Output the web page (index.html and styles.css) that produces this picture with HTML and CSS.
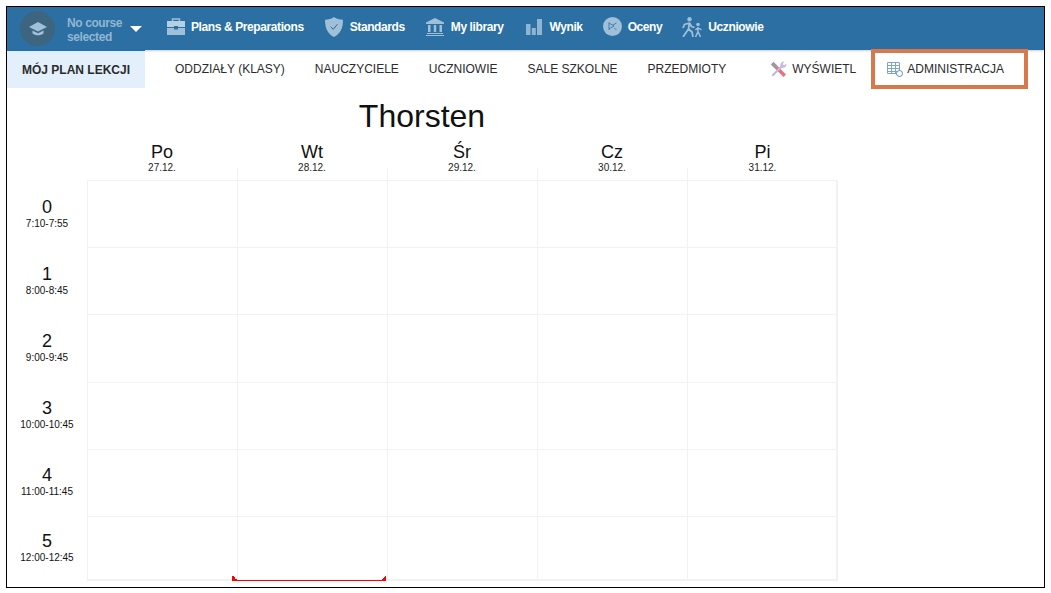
FILE: index.html
```html
<!DOCTYPE html>
<html lang="en">
<head>
    <meta charset="UTF-8">
    <meta name="viewport" content="width=device-width, initial-scale=1.0">
    <title>Plan lekcji</title>
    <link rel="stylesheet" href="styles.css">
</head>
<body>

<div class="frame">
    <header class="topbar">
        <div class="course">
            <span class="course-badge">
                <svg width="20" height="16" viewBox="0 0 20 16"><path d="M10 1 19 6 10 10.5 1 6Z" fill="#9fc0d8"/><path d="M4.5 9.5v3c2.8 2.4 8.2 2.4 11 0v-3L10 12.3Z" fill="#9fc0d8"/></svg>
            </span>
            <span class="course-name">No course selected</span>
            <span class="caret"></span>
        </div>
        <a class="top-item plans">
            <svg width="18" height="17" viewBox="0 0 18 17"><path d="M5.5 3V1h7v2" fill="none" stroke="#9fc0d8" stroke-width="1.4"/><path d="M0 3h18v6h-7V8H7v1H0Z" fill="#b5d0e3"/><path d="M0 10h7v1.5h4V10h7v7H0Z" fill="#9fc0d8"/></svg>
            Plans &amp; Preparations
        </a>
        <a class="top-item standards">
            <svg width="18" height="20" viewBox="0 0 18 20"><path d="M9 0c2.5 1.800 5.500 2.700 9 2.800C18 11 15.500 16.800 9 20 2.500 16.800 0 11 0 2.800 3.500 2.700 6.500 1.800 9 0Z" fill="#9fc0d8"/><path d="M5.800 9.800 8.200 12.300 12.500 7.200" fill="none" stroke="#2c6fa3" stroke-width="1"/></svg>
            Standards
        </a>
        <a class="top-item library">
            <svg width="18" height="18" viewBox="0 0 18 18"><path d="M9 0 18 4.500V6H0V4.500Z" fill="#9fc0d8"/><path d="M2 7h2.500v7H2ZM7.800 7h2.400v7H7.800ZM13.500 7H16v7h-2.500ZM1 15h16v1H1ZM0 17h18v1H0Z" fill="#9fc0d8"/></svg>
            My library
        </a>
        <a class="top-item wynik">
            <svg width="16" height="17" viewBox="0 0 16 17"><path d="M0 6h4.500v11H0ZM5.800 10h4v7h-4ZM11 1h5v16h-5Z" fill="#8fb5d1"/></svg>
            Wynik
        </a>
        <a class="top-item oceny">
            <svg width="19" height="19" viewBox="0 0 19 19"><circle cx="9.500" cy="9.500" r="9.500" fill="#9fc0d8"/><path d="M6 5.500v7.500M6 6l5 3-5 3M10 8l3.500-2M11.500 11l2 2" fill="none" stroke="#2c6fa3" stroke-width=".8"/></svg>
            Oceny
        </a>
        <a class="top-item pupils">
            <svg width="22" height="20" viewBox="0 0 22 20"><circle cx="8.500" cy="2.200" r="2.200" fill="#9fc0d8"/><circle cx="17" cy="7.500" r="1.800" fill="#9fc0d8"/><path d="M8.500 5.500 7.500 12 2 20M7.500 12l3.500 3 1 5M8.500 6 3.500 7.500 2 11M8.500 6l2 3.500 3 1" fill="none" stroke="#9fc0d8" stroke-width="1.800"/><path d="M17 10v4.500L14.500 20M17 14.500l2.500 5.500M17 10.500l-2.500 2.500M17 10.500l3.500 2.500" fill="none" stroke="#9fc0d8" stroke-width="1.500"/></svg>
            Uczniowie
        </a>
    </header>

    <nav class="subnav">
        <a class="tab active">MÓJ PLAN LEKCJI</a>
        <a class="tab">ODDZIAŁY (KLASY)</a>
        <a class="tab">NAUCZYCIELE</a>
        <a class="tab">UCZNIOWIE</a>
        <a class="tab">SALE SZKOLNE</a>
        <a class="tab">PRZEDMIOTY</a>
        <a class="tab show">
            <svg width="17" height="17" viewBox="0 0 17 17"><path d="M1 3.500 3.500 1 16 13.500 13.500 16Z" fill="#e8737a"/><path d="M1 3.500 3.500 1 8 5.500 5.500 8Z" fill="#9a9aa5"/><path d="M1.500 14 10.500 5c-.6-2 .8-4.500 4-4.500L12.500 3l1.500 1.500L16.500 2.500c.3 3-2 4.800-4.500 4.200L3 15.500Z" fill="#c3b9dc"/></svg>
            WYŚWIETL
        </a>
        <a class="tab admin">
            <svg width="16" height="16" viewBox="0 0 16 16"><path d="M.5 1.500h12v11H.5ZM.5 4.500h12M.5 7.500h12M.5 10.500h12M4.500 1.500v11M8.500 1.500v11" fill="none" stroke="#7ea6cc"/><circle cx="12.500" cy="12.500" r="3" fill="#fff" stroke="#5b8fbf"/></svg>
            ADMINISTRACJA
        </a>
    </nav>

    <h1 class="plan-title">Thorsten</h1>

    <div class="timetable">
        <div class="corner"></div>
        <div class="day"><span class="day-name">Po</span><span class="day-date">27.12.</span></div>
        <div class="day"><span class="day-name">Wt</span><span class="day-date">28.12.</span></div>
        <div class="day"><span class="day-name">Śr</span><span class="day-date">29.12.</span></div>
        <div class="day"><span class="day-name">Cz</span><span class="day-date">30.12.</span></div>
        <div class="day"><span class="day-name">Pi</span><span class="day-date">31.12.</span></div>

        <div class="period"><span class="period-no">0</span><span class="period-time">7:10-7:55</span></div>
        <div class="cell"></div><div class="cell"></div><div class="cell"></div><div class="cell"></div><div class="cell"></div>

        <div class="period"><span class="period-no">1</span><span class="period-time">8:00-8:45</span></div>
        <div class="cell"></div><div class="cell"></div><div class="cell"></div><div class="cell"></div><div class="cell"></div>

        <div class="period"><span class="period-no">2</span><span class="period-time">9:00-9:45</span></div>
        <div class="cell"></div><div class="cell"></div><div class="cell"></div><div class="cell"></div><div class="cell"></div>

        <div class="period"><span class="period-no">3</span><span class="period-time">10:00-10:45</span></div>
        <div class="cell"></div><div class="cell"></div><div class="cell"></div><div class="cell"></div><div class="cell"></div>

        <div class="period"><span class="period-no">4</span><span class="period-time">11:00-11:45</span></div>
        <div class="cell"></div><div class="cell"></div><div class="cell"></div><div class="cell"></div><div class="cell"></div>

        <div class="period"><span class="period-no">5</span><span class="period-time">12:00-12:45</span></div>
        <div class="cell"></div><div class="cell today"></div><div class="cell"></div><div class="cell"></div><div class="cell"></div>
    </div>
</div>

</body>
</html>
```

FILE: styles.css
```css
html, body {
    margin: 0;
    padding: 0;
    background-color: #fff;
}
body {
    padding: 6px 6px 5px 6px;
    font-family: "Liberation Sans", Arial, sans-serif;
    color: #222;
}
a {
    color: inherit;
    text-decoration: none;
}
.frame {
    box-sizing: border-box;
    width: 1039px;
    height: 582px;
    border: 1px solid #000;
    overflow: hidden;
}
.topbar {
    display: flex;
    align-items: center;
    height: 43px;
    background-color: #2c6fa3;
    color: #fff;
    font-size: 12px;
    font-weight: bold;
    box-shadow: 0 1px 2px rgba(0, 0, 0, 0.2);
}
.course {
    display: flex;
    align-items: center;
    padding-left: 13px;
    width: 147px;
    box-sizing: border-box;
}
.course-badge {
    display: flex;
    align-items: center;
    justify-content: center;
    flex: none;
    width: 35px;
    height: 35px;
    border-radius: 50%;
    background-color: #3d6580;
}
.course-name {
    width: 60px;
    margin-left: 12px;
    padding-top: 2px;
    color: #92b6d2;
    line-height: 14px;
    letter-spacing: -0.4px;
}
.caret {
    width: 0;
    height: 0;
    margin-left: 3px;
    border-left: 6px solid transparent;
    border-right: 6px solid transparent;
    border-top: 6px solid #fff;
}
.top-item {
    display: flex;
    align-items: center;
    padding-bottom: 4px;
    white-space: nowrap;
    letter-spacing: -0.4px;
}
.plans { margin-left: 13px; gap: 6px; }
.standards { margin-left: 21px; gap: 7px; }
.library { margin-left: 21px; gap: 7px; }
.wynik { margin-left: 22px; gap: 8px; }
.oceny { margin-left: 20px; gap: 6px; }
.pupils { margin-left: 19px; gap: 5px; }

.subnav {
    display: flex;
    align-items: stretch;
    height: 38px;
    font-size: 12px;
    color: #2b2b2b;
}
.tab {
    display: flex;
    align-items: center;
    margin-left: 30px;
    white-space: nowrap;
}
.tab.active {
    box-sizing: border-box;
    justify-content: center;
    width: 138px;
    margin-left: 0;
    background-color: #e3f0fb;
    border-top: 1px solid #1a72bd;
    font-weight: bold;
}
.show {
    gap: 5px;
    margin-left: 44px;
}
.admin {
    box-sizing: border-box;
    position: relative;
    gap: 4px;
    width: 157px;
    height: 40px;
    margin-left: 15px;
    margin-top: -1px;
    padding-left: 12px;
    border: 4px solid #d9784a;
}

.plan-title {
    margin: 0;
    width: 830px;
    height: 50px;
    padding-top: 10px;
    box-sizing: border-box;
    text-align: center;
    font-size: 32px;
    font-weight: normal;
    line-height: 37px;
    color: #111;
}
.timetable {
    display: grid;
    grid-template-columns: 80px repeat(4, 150px) 151px;
    grid-template-rows: 42px repeat(5, 67.2px) 65px;
    width: 831px;
}
.day {
    display: flex;
    flex-direction: column;
    align-items: center;
    position: relative;
}
.day + .day::before {
    content: "";
    position: absolute;
    left: 0;
    bottom: 0;
    height: 12px;
    border-left: 1px solid #f2f2f2;
}
.day-name {
    font-size: 18px;
    line-height: 20px;
    padding-top: 4px;
    color: #111;
}
.day-date {
    font-size: 10px;
    line-height: 12px;
}
.period {
    display: flex;
    flex-direction: column;
    align-items: center;
    justify-content: center;
    color: #111;
}
.period-no {
    font-size: 18px;
    line-height: 20px;
}
.period-time {
    font-size: 10px;
    line-height: 14px;
}
.cell {
    border-top: 1px solid #f2f2f2;
    border-left: 1px solid #f2f2f2;
}
.cell:nth-child(6n) {
    border-right: 2px solid #f2f2f2;
}
.timetable > .cell:nth-last-child(-n+5) {
    border-bottom: 2px solid #f2f2f2;
}
.cell.today {
    position: relative;
}
/* red marker: thin line with small corner wedges */
.cell.today::after {
    content: "";
    position: absolute;
    left: -6px;
    right: 1px;
    bottom: -2px;
    height: 6px;
    background:
        linear-gradient(to top right, #f00 50%, transparent 50%) left bottom / 6px 6px no-repeat,
        linear-gradient(to top left, #f00 50%, transparent 50%) right bottom / 6px 6px no-repeat,
        linear-gradient(#f00, #f00) left bottom / 100% 1px no-repeat;
}
```
